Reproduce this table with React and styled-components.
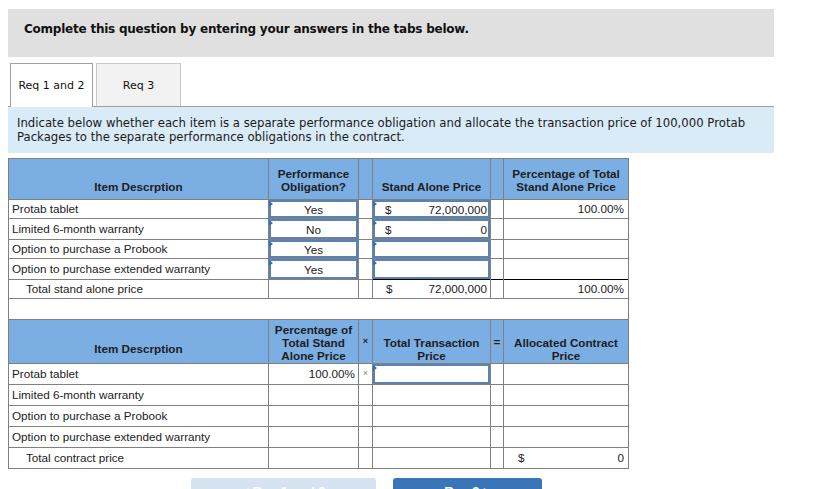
import React from 'react';
import styled, { createGlobalStyle } from 'styled-components';

const GlobalStyle = createGlobalStyle`
  html, body {
    margin: 0;
    padding: 0;
    overflow: hidden;
    background: #ffffff;
  }
  body {
    font-family: "DejaVu Sans", Verdana, sans-serif;
  }
`;

const Page = styled.div`
  width: 766px;
  padding: 9px 0 0 8px;
`;

const Banner = styled.div`
  height: 48px;
  box-sizing: border-box;
  padding: 13px 0 0 16px;
  background: #e0e0e0;
  color: #111111;
  font: bold 12px/14px "DejaVu Sans", Verdana, sans-serif;
  letter-spacing: -0.23px;
`;

const TabBar = styled.div`
  display: flex;
  align-items: flex-start;
  gap: 3px;
  margin-top: 6px;
  padding-left: 2px;
`;

const Tab = styled.div`
  position: relative;
  z-index: 1;
  box-sizing: border-box;
  width: ${p => p.$w}px;
  height: ${p => (p.$active ? 44 : 43)}px;
  margin-bottom: ${p => (p.$active ? -1 : 0)}px;
  display: flex;
  align-items: center;
  justify-content: center;
  border: 1px solid ${p => (p.$active ? '#a0a0a0' : '#c8c8c8')};
  border-bottom: none;
  background: ${p => (p.$active ? '#ffffff' : '#f2f2f2')};
  color: #111111;
  font: 11px "DejaVu Sans", Verdana, sans-serif;
`;

const Prompt = styled.div`
  height: 47px;
  box-sizing: border-box;
  padding: 9px 0 0 9px;
  border-top: 1px solid #a0a0a0;
  background: #daebf8;
  color: #1a1a1a;
  font: 11.7px/14px "DejaVu Sans", Verdana, sans-serif;
  white-space: nowrap;
`;

const Sheet = styled.div`
  margin-top: 5px;
  width: 621px;
`;

const Grid = styled.div`
  display: grid;
  grid-template-columns: 259px 89px 13px 117px 12px 124px;
  grid-template-rows: ${p => p.$rows};
  gap: 1px;
  padding: 1px;
  width: max-content;
  background: #808080;
`;

const Spacer = styled.div`
  height: 20px;
  border-left: 1px solid #808080;
  border-right: 1px solid #808080;
`;

const HeadCell = styled.div`
  display: flex;
  flex-direction: column;
  align-items: center;
  justify-content: ${p => (p.$mid ? 'center' : 'flex-end')};
  padding-bottom: ${p => (p.$mid ? 0 : p.$pb)}px;
  background: #7baee3;
  color: #1e1e1e;
  font: bold 11.7px/13px "Liberation Sans", Arial, sans-serif;
  text-align: center;
  white-space: nowrap;
`;

const Op = styled.span`
  font-size: ${p => (p.$small ? 9 : 11.7)}px;
  color: ${p => (p.$muted ? '#8a8a8a' : '#1e1e1e')};
`;

const Cell = styled.div`
  display: flex;
  align-items: center;
  justify-content: ${p =>
    p.$align === 'right' ? 'flex-end' : p.$align === 'center' ? 'center' : 'flex-start'};
  padding: 0 ${p => p.$pr ?? 3}px 1px ${p => p.$pl ?? 3}px;
  background: #ffffff;
  color: #222222;
  font: 11.7px/13px "Liberation Sans", Arial, sans-serif;
  white-space: nowrap;
  box-shadow: ${p => (p.$rule ? '0 -1px 0 #000000' : 'none')};
`;

const Field = styled.div`
  position: relative;
  flex: 1;
  align-self: stretch;
  display: flex;
  align-items: center;
  justify-content: ${p => (p.$money ? 'space-between' : 'center')};
  padding: ${p => (p.$money ? '0 1px 0 10px' : '0')};
  margin-bottom: -1px;
  border: 2px solid #5b82b0;
  background: #ffffff;
`;

const Flag = styled.span`
  position: absolute;
  left: -2px;
  top: -1px;
  width: 0;
  height: 0;
  border-left: 4px solid #2f6fc0;
  border-top: 3px solid transparent;
  border-bottom: 3px solid transparent;
`;

const Money = styled.div`
  flex: 1;
  display: flex;
  justify-content: space-between;
`;

const Nav = styled.div`
  display: flex;
  gap: 17px;
  margin-top: 9px;
  padding-left: 183px;
`;

const NavButton = styled.div`
  width: ${p => p.$w}px;
  height: 34px;
  box-sizing: border-box;
  padding-top: 6px;
  border-radius: 3px 3px 0 0;
  background: ${p => (p.$primary ? '#3a75b8' : '#d6e3f0')};
  color: #ffffff;
  font: bold 13px/16px "Liberation Sans", Arial, sans-serif;
  text-align: center;
`;

const items = [
  'Protab tablet',
  'Limited 6-month warranty',
  'Option to purchase a Probook',
  'Option to purchase extended warranty',
];

const obligations = ['Yes', 'No', 'Yes', 'Yes'];
const prices = ['72,000,000', '0', '', ''];
const shares = ['100.00%', '', '', ''];

const Input = ({ children, money }) => (
  <Cell $pl={0} $pr={0}>
    <Field $money={money}>
      <Flag />
      {children}
    </Field>
  </Cell>
);

const StandAloneTable = () => (
  <Grid $rows="40px 18px 20px 18px 20px 18px">
    <HeadCell $pb={6}>Item Descrption</HeadCell>
    <HeadCell $pb={6}>
      Performance
      <br />
      Obligation?
    </HeadCell>
    <HeadCell $pb={6} />
    <HeadCell $pb={6}>Stand Alone Price</HeadCell>
    <HeadCell $pb={6} />
    <HeadCell $pb={6}>
      Percentage of Total
      <br />
      Stand Alone Price
    </HeadCell>

    {items.map((item, i) => (
      <React.Fragment key={item}>
        <Cell>{item}</Cell>
        <Input>{obligations[i]}</Input>
        <Cell />
        {prices[i] ? (
          <Input money>
            <span>$</span>
            <span>{prices[i]}</span>
          </Input>
        ) : (
          <Input />
        )}
        <Cell />
        <Cell $align="right" $pr={4}>
          {shares[i]}
        </Cell>
      </React.Fragment>
    ))}

    <Cell $pl={17}>Total stand alone price</Cell>
    <Cell />
    <Cell />
    <Cell $pl={13} $pr={3} $rule>
      <Money>
        <span>$</span>
        <span>72,000,000</span>
      </Money>
    </Cell>
    <Cell $rule />
    <Cell $align="right" $pr={4} $rule>
      100.00%
    </Cell>
  </Grid>
);

const AllocationTable = () => (
  <Grid $rows="43px 20px 20px 20px 20px 20px">
    <HeadCell $pb={8}>Item Descrption</HeadCell>
    <HeadCell $pb={1}>
      Percentage of
      <br />
      Total Stand
      <br />
      Alone Price
    </HeadCell>
    <HeadCell $mid>
      <Op $small>×</Op>
    </HeadCell>
    <HeadCell $pb={1}>
      Total Transaction
      <br />
      Price
    </HeadCell>
    <HeadCell $mid>
      <Op>=</Op>
    </HeadCell>
    <HeadCell $pb={1}>
      Allocated Contract
      <br />
      Price
    </HeadCell>

    {items.map((item, i) => (
      <React.Fragment key={item}>
        <Cell>{item}</Cell>
        <Cell $align="right" $pr={3}>
          {shares[i]}
        </Cell>
        <Cell $align="center" $pl={0} $pr={0}>
          {i === 0 && (
            <Op $small $muted>
              ×
            </Op>
          )}
        </Cell>
        {i === 0 ? <Input /> : <Cell />}
        <Cell />
        <Cell />
      </React.Fragment>
    ))}

    <Cell $pl={17}>Total contract price</Cell>
    <Cell />
    <Cell />
    <Cell />
    <Cell />
    <Cell $pl={14} $pr={4}>
      <Money>
        <span>$</span>
        <span>0</span>
      </Money>
    </Cell>
  </Grid>
);

export default function App() {
  return (
    <Page>
      <GlobalStyle />
      <Banner>Complete this question by entering your answers in the tabs below.</Banner>

      <TabBar>
        <Tab $w={83} $active>
          Req 1 and 2
        </Tab>
        <Tab $w={85}>Req 3</Tab>
      </TabBar>

      <Prompt>
        Indicate below whether each item is a separate performance obligation and allocate the
        transaction price of 100,000 Protab
        <br />
        Packages to the separate performance obligations in the contract.
      </Prompt>

      <Sheet>
        <StandAloneTable />
        <Spacer />
        <AllocationTable />
      </Sheet>

      <Nav>
        <NavButton $w={185}>&lt; Req 1 and 2</NavButton>
        <NavButton $w={149} $primary>
          Req 3 &gt;
        </NavButton>
      </Nav>
    </Page>
  );
}
